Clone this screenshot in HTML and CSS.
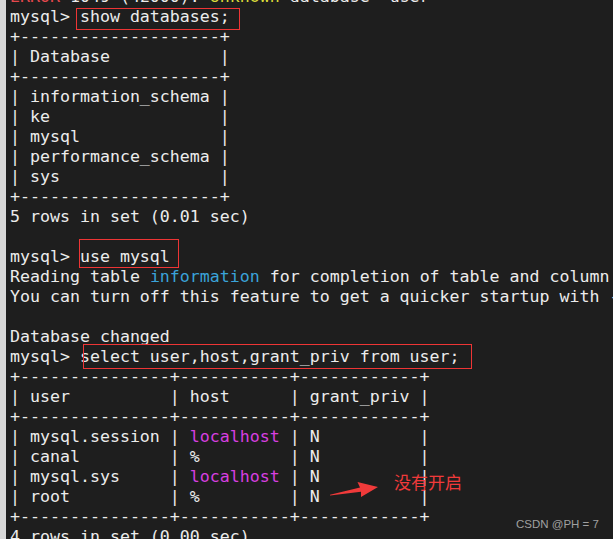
FILE: index.html
```html
<!DOCTYPE html>
<html lang="zh">
<head>
<meta charset="utf-8">
<title>mysql terminal</title>
<link rel="stylesheet" href="styles.css">
</head>
<body>
<div class="screen">
  <div class="gutter"></div>
  <div class="term">
<pre class="out"><span class="err">ERROR</span> 1049 (42000): <span class="warn">Unknown</span> database 'user'
mysql&gt; show databases;
+--------------------+
| Database           |
+--------------------+
| information_schema |
| ke                 |
| mysql              |
| performance_schema |
| sys                |
+--------------------+
5 rows in set (0.01 sec)

mysql&gt; use mysql
Reading table <span class="kw">information</span> for completion of table and column names
You can turn off this feature to get a quicker startup with -A

Database changed
mysql&gt; select user,host,grant_priv from user;
+---------------+-----------+------------+
| user          | host      | grant_priv |
+---------------+-----------+------------+
| mysql.session | <span class="host">localhost</span> | N          |
| canal         | %         | N          |
| mysql.sys     | <span class="host">localhost</span> | N          |
| root          | %         | N          |
+---------------+-----------+------------+
4 rows in set (0.00 sec)</pre>
  </div>
  <div class="mark mark-show"></div>
  <div class="mark mark-use"></div>
  <div class="mark mark-select"></div>
  <svg class="arrow" width="54" height="20" viewBox="0 0 54 20">
    <polygon points="2,14.8 32,7.6 29.5,2 50,7 33,17 33,11.8 2,15.6" fill="#f03a3a"/>
  </svg>
  <div class="note">没有开启</div>
  <div class="watermark">CSDN @PH = 7</div>
</div>
</body>
</html>
```

FILE: styles.css
```css
html, body {
  margin: 0;
  padding: 0;
  background: #1e1e1e;
}
.screen {
  position: relative;
  display: flex;
  width: 613px;
  height: 539px;
  overflow: hidden;
}
.gutter {
  width: 6px;
  flex: none;
  background: #d8d8d8;
}
.term {
  flex: 1;
  background: #1e1e1e;
  padding-left: 4px;
  overflow: hidden;
}
.out {
  margin: -13px 0 0 0;
  font-family: "DejaVu Sans Mono", monospace;
  font-size: 16.6px;
  line-height: 20px;
  color: #ececec;
  white-space: pre;
}
.err { color: #e5484d; }
.warn { color: #dcdc3a; }
.kw { color: #3aa3d9; }
.host { color: #d83fe0; }
.mark {
  position: absolute;
  border: 1.5px solid #ee3535;
  box-sizing: border-box;
}
.mark-show { left: 76px; top: 8px; width: 164px; height: 22px; }
.mark-use { left: 79px; top: 239px; width: 100px; height: 29px; }
.mark-select { left: 83px; top: 344px; width: 389px; height: 25px; }
.arrow {
  position: absolute;
  left: 328px;
  top: 480px;
}
.note {
  position: absolute;
  left: 394px;
  top: 470px;
  font-family: "Noto Sans CJK SC", sans-serif;
  font-size: 17px;
  line-height: 24px;
  color: #f03a3a;
}
.watermark {
  position: absolute;
  left: 516px;
  top: 516px;
  font-family: "Liberation Sans", Arial, sans-serif;
  font-size: 11.5px;
  line-height: 16px;
  color: #a0a0a0;
}
```
